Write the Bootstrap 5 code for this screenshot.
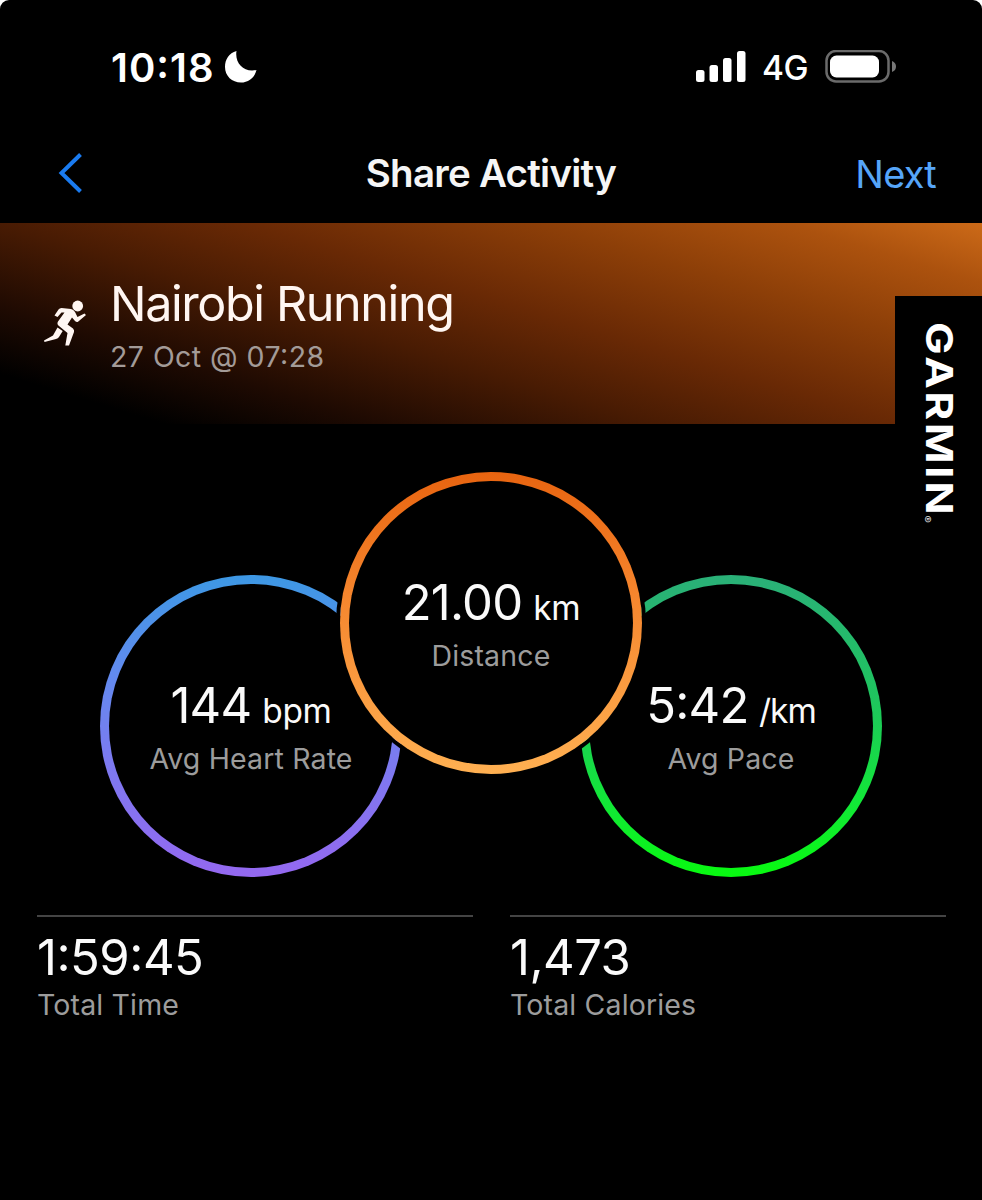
<!DOCTYPE html>
<html lang="en" data-bs-theme="dark">
<head>
<meta charset="utf-8">
<meta name="viewport" content="width=device-width, initial-scale=1">
<title>Share Activity</title>
<link href="https://cdn.jsdelivr.net/npm/bootstrap@5.3.0/dist/css/bootstrap.min.css" rel="stylesheet">
<style>
html{background:#fff}
body{font-family:Inter,"Liberation Sans",sans-serif;background:transparent;color:#fff}
.phone{height:1200px;background:#000;border-radius:9px 9px 0 0}
.status{height:134px;padding:0 86px 0 111px}
.clock{font-size:40px;font-weight:600;line-height:134px;letter-spacing:1px;margin-top:1px}
.colon{position:relative;top:-.09em}
.moon{margin-left:9px}
.net{font-size:33.5px;font-weight:450;line-height:134px;letter-spacing:-.5px;margin:2px 17px 0 16px}
.topbar{height:89px;padding:0 46px 0 57px}
.heading{font-size:38.5px;font-weight:600;line-height:78px;letter-spacing:-.75px;color:#f5f5f5}
.next{font-size:38px;line-height:80px;letter-spacing:-.8px;color:#56a5f8;text-decoration:none}
.hero{height:201px;background:linear-gradient(17deg,#000 10%,#1e0a02 23%,#481b03 40%,#692905 55%,#8d3f08 73%,#ac520e 88%,#cc6a18 100%)}
.sport{margin:76px 0 0 43px}
.act{font-size:48.5px;line-height:60px;margin:51px 0 0 23px;letter-spacing:-1.4px;font-weight:400;color:#fff6f2}
.when{font-size:28.5px;line-height:36px;margin:5px 0 0 23px;letter-spacing:.45px;color:#a39b98}
.brand{top:73px;right:0;width:87px;height:240px;background:#000}
.rings{margin-top:48px}
.ring{width:302px;height:302px;border:9px solid transparent;border-radius:50%}
.hr{margin-top:103px;margin-right:-62px;background:linear-gradient(#000,#000) padding-box,linear-gradient(#3d98e4,#5f8cee 30%,#7b7bf0 60%,#9468f0) border-box}
.dist{z-index:1;box-shadow:0 0 0 4px #000;background:linear-gradient(#000,#000) padding-box,linear-gradient(#e86410,#f5852d 40%,#ffb052) border-box}
.pace{margin-top:103px;margin-left:-62px;background:linear-gradient(#000,#000) padding-box,linear-gradient(#2ab078,#1fc45f 40%,#12e838 75%,#08f910) border-box}
.val{font-size:49px;line-height:60px;font-weight:400;white-space:pre;letter-spacing:-.8px;margin-top:92px;color:#fafafa}
.unit{font-size:33.5px;letter-spacing:-.4px;margin-left:2px}
.pace .unit{letter-spacing:-1px}
.lab{font-size:28.5px;line-height:36px;letter-spacing:.15px;color:#9c9c9c}
.totals{padding:0 36px 0 37px;gap:37px;margin-top:38px}
.total{flex:1 1 0;border-top:2px solid #444}
.total .val{margin-top:11px;letter-spacing:-.5px}
.total .lab{margin-top:-1px}
</style>
</head>
<body>
<main class="phone overflow-hidden">
  <div class="status d-flex align-items-center justify-content-between">
    <div class="d-flex align-items-center">
      <span class="clock">10<span class="colon">:</span>18</span>
      <svg class="moon" width="34" height="34" viewBox="0 0 34 34"><path fill="#fff" d="M12.500 1C10.500 13 20 23 32.500 20C30.500 28 24 32.500 17 32.500C8 32.500 1 26 1 17C1 9.500 5 3 12.500 1Z"/></svg>
    </div>
    <div class="d-flex align-items-center">
      <svg width="51" height="34" viewBox="0 0 51 34" fill="#fff"><rect x="1" y="20" width="8.500" height="12" rx="2.500"/><rect x="14.500" y="15" width="8.500" height="17" rx="2.500"/><rect x="28" y="8" width="8.500" height="24" rx="2.500"/><rect x="42" y="1" width="8.500" height="31" rx="2.500"/></svg>
      <span class="net">4G</span>
      <svg width="71" height="34" viewBox="0 0 71 34"><rect x="1.500" y="1" width="62" height="30.500" rx="9.500" fill="none" stroke="#6b6b6b" stroke-width="2.500"/><rect x="5" y="5.500" width="49" height="22" rx="6.500" fill="#fff"/><path d="M67 11Q71 12.500 71 16.500T67 22Z" fill="#777"/></svg>
    </div>
  </div>
  <header class="topbar d-flex justify-content-between position-relative">
    <svg class="mt-3" width="26" height="44" viewBox="0 0 26 44"><path d="M23.500 4.500L4.500 23L23.500 41.500" fill="none" stroke="#1a7bf0" stroke-width="4"/></svg>
    <h1 class="heading position-absolute start-0 end-0 text-center m-0">Share Activity</h1>
    <a class="next position-relative" href="#">Next</a>
  </header>
  <section class="hero d-flex position-relative">
    <svg class="sport flex-shrink-0" width="44" height="48" viewBox="0 0 44 48" fill="#fff6f2"><circle cx="34.700" cy="7" r="5.400"/><path d="M11.500 16.500L15.500 10.500Q16.500 9 18.500 9L28 10Q30.500 10.500 32 13L34.500 18L41.500 14.500L43 16L35 22.800Q33.500 23.500 32 22L29 18.500L24.500 25.500L30 29.500Q31.500 31 31 33L26 46.500L22.300 46.500L24.500 34L16 27Q13.500 25 15 22.500L21.500 13.500L18.500 13.500L14.500 18Z"/><path d="M14.500 28.500L19.700 32L16 38Q15 39.500 13 40L1.500 43L1 41.500L10 36.500Z"/></svg>
    <div>
      <h2 class="act mb-0">Nairobi Running</h2>
      <p class="when mb-0">27 Oct @ 07<span class="colon">:</span>28</p>
    </div>
    <div class="brand position-absolute">
      <svg class="d-block" width="87" height="240" role="img" aria-label="Garmin"><g transform="translate(30.500 26)rotate(90)"><text transform="scale(1.16 1)" x="0" y="0" font-family="Inter" font-weight="700" font-size="37.500" fill="#fff" textLength="166" lengthAdjust="spacing">GARMIN</text><text x="193.500" y="3" font-family="Inter" font-size="11" fill="#ddd">®</text></g></svg>
    </div>
  </section>
  <section class="rings d-flex justify-content-center align-items-start">
    <div class="ring hr text-center"><div class="val">144<span class="unit"> bpm</span></div><div class="lab">Avg Heart Rate</div></div>
    <div class="ring dist text-center position-relative"><div class="val">21.00<span class="unit"> km</span></div><div class="lab">Distance</div></div>
    <div class="ring pace text-center"><div class="val">5<span class="colon">:</span>42<span class="unit"> /km</span></div><div class="lab">Avg Pace</div></div>
  </section>
  <section class="totals d-flex">
    <div class="total"><div class="val">1<span class="colon">:</span>59<span class="colon">:</span>45</div><div class="lab">Total Time</div></div>
    <div class="total"><div class="val">1,473</div><div class="lab">Total Calories</div></div>
  </section>
</main>
<script src="https://cdn.jsdelivr.net/npm/bootstrap@5.3.0/dist/js/bootstrap.bundle.min.js"></script>
</body>
</html>
